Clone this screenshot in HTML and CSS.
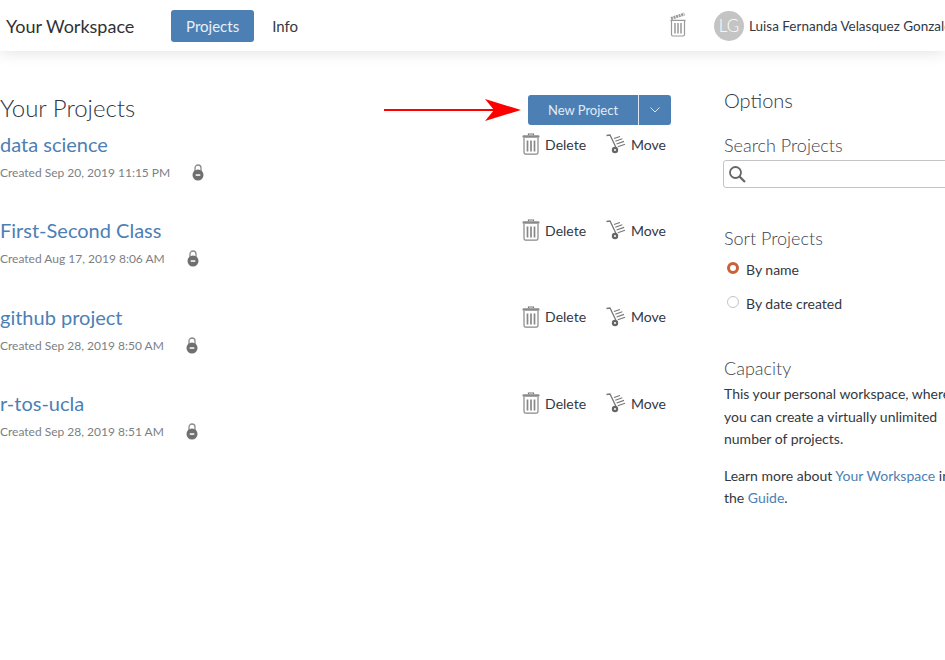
FILE: index.html
```html
<!DOCTYPE html>
<html lang="en">
<head>
<meta charset="utf-8">
<title>Your Workspace</title>
<link rel="stylesheet" href="styles.css">
</head>
<body>
<svg class="defs" width="0" height="0" aria-hidden="true">
  <defs>
    <symbol id="bin" viewBox="0 0 18 22">
      <path d="M6.5 2.2V1h5v1.2" fill="none" stroke="#777" stroke-width="1.2"/>
      <rect x="0.5" y="2.2" width="17" height="2.6" rx="1" fill="#8a8a8a"/>
      <path d="M2 5v14.5q0 1.7 1.7 1.7h10.6q1.7 0 1.7-1.7V5" fill="#fff" stroke="#888" stroke-width="1.2"/>
      <path d="M5.5 7.5v11M9 7.5v11M12.500 7.500v11" stroke="#888" stroke-width="1.7"/>
    </symbol>
    <symbol id="cart" viewBox="0 0 20 20">
      <path d="M0.500 1.500L4 1l6 12.500" fill="none" stroke="#777" stroke-width="1.300"/>
      <path d="M8 4.500l6-2M9.300 7.200l7-2.400M10.600 10l7.400-2.600M11.800 12.800l7.200-2.500" stroke="#777" stroke-width="1.200"/>
      <circle cx="9" cy="16" r="3.200" fill="#666"/>
      <circle cx="9" cy="16" r="1" fill="#fff"/>
    </symbol>
    <symbol id="lock" viewBox="0 0 12 17">
      <path d="M3 7V4a3 3 0 0 1 6 0v3" fill="none" stroke="#8a8a8a" stroke-width="1.300"/>
      <circle cx="6" cy="11" r="5.500" fill="#6f6f6f"/>
      <rect x="3.700" y="10.300" width="4.600" height="1.500" fill="#fff"/>
    </symbol>
  </defs>
</svg>

<header class="topbar">
  <div class="brand">Your Workspace</div>
  <nav class="tabs">
    <a class="tab tab-active">Projects</a>
    <a class="tab">Info</a>
  </nav>
  <div class="top-right">
    <svg class="top-bin" width="18" height="26" viewBox="0 0 18 26" aria-hidden="true">
      <path d="M2 6.500l13.500-4.500" stroke="#999" stroke-width="3" stroke-dasharray="2 0.700"/>
      <path d="M1.500 8.500h15" stroke="#999" stroke-width="1.500"/>
      <path d="M2.500 9v13.500q0 1.500 1.500 1.500h10q1.500 0 1.500-1.500V9" fill="#fff" stroke="#999" stroke-width="1.200"/>
      <path d="M6 11v10.500M9 11v10.500M12 11v10.500" stroke="#999" stroke-width="1.500"/>
    </svg>
    <div class="user">
      <span class="avatar">LG</span>
      <span class="user-name">Luisa Fernanda Velasquez Gonzalez</span>
    </div>
  </div>
</header>

<div class="page">
  <main class="projects">
    <div class="projects-head">
      <h1 class="projects-title">Your Projects</h1>
      <div class="head-actions">
        <svg class="arrow" width="137" height="22" viewBox="0 0 137 22" aria-hidden="true">
          <path d="M0 10h110v2H0z" fill="#f00"/>
          <path d="M101 0l36 11-36 11 9-11z" fill="#f00"/>
        </svg>
        <div class="split-btn">
          <button class="btn-main">New Project</button>
          <button class="btn-caret" aria-label="More">
            <svg width="10" height="6" viewBox="0 0 10 6"><path d="M0.500 0.500L5 5l4.500-4.500" fill="none" stroke="#dce6f1" stroke-width="1"/></svg>
          </button>
        </div>
      </div>
    </div>

    <ul class="project-list">
      <li class="project">
        <div class="project-main">
          <a class="project-name">data science</a>
          <div class="project-meta"><span class="created">Created Sep 20, 2019 11:15 PM</span><svg class="lock" width="12" height="17"><use href="#lock"/></svg></div>
        </div>
        <div class="project-actions">
          <span class="action act-del"><svg width="18" height="22"><use href="#bin"/></svg>Delete</span>
          <span class="action"><svg width="20" height="20"><use href="#cart"/></svg>Move</span>
        </div>
      </li>
      <li class="project">
        <div class="project-main">
          <a class="project-name">First-Second Class</a>
          <div class="project-meta"><span class="created">Created Aug 17, 2019 8:06 AM</span><svg class="lock" width="12" height="17"><use href="#lock"/></svg></div>
        </div>
        <div class="project-actions">
          <span class="action act-del"><svg width="18" height="22"><use href="#bin"/></svg>Delete</span>
          <span class="action"><svg width="20" height="20"><use href="#cart"/></svg>Move</span>
        </div>
      </li>
      <li class="project">
        <div class="project-main">
          <a class="project-name">github project</a>
          <div class="project-meta"><span class="created">Created Sep 28, 2019 8:50 AM</span><svg class="lock" width="12" height="17"><use href="#lock"/></svg></div>
        </div>
        <div class="project-actions">
          <span class="action act-del"><svg width="18" height="22"><use href="#bin"/></svg>Delete</span>
          <span class="action"><svg width="20" height="20"><use href="#cart"/></svg>Move</span>
        </div>
      </li>
      <li class="project">
        <div class="project-main">
          <a class="project-name">r-tos-ucla</a>
          <div class="project-meta"><span class="created">Created Sep 28, 2019 8:51 AM</span><svg class="lock" width="12" height="17"><use href="#lock"/></svg></div>
        </div>
        <div class="project-actions">
          <span class="action act-del"><svg width="18" height="22"><use href="#bin"/></svg>Delete</span>
          <span class="action"><svg width="20" height="20"><use href="#cart"/></svg>Move</span>
        </div>
      </li>
    </ul>
  </main>

  <aside class="options">
    <div class="options-head">
      <h2 class="options-title">Options</h2>
      <span class="close">✕</span>
    </div>
    <h3 class="opt-label">Search Projects</h3>
    <div class="search">
      <svg width="19" height="19" viewBox="0 0 19 19" aria-hidden="true">
        <circle cx="7.500" cy="7.500" r="5.500" fill="none" stroke="#666" stroke-width="1.800"/>
        <path d="M11.500 11.500L17 17" stroke="#666" stroke-width="2.200"/>
      </svg>
    </div>
    <h3 class="opt-label sort-label">Sort Projects</h3>
    <div class="radio-row"><span class="radio radio-on"></span>By name</div>
    <div class="radio-row"><span class="radio"></span>By date created</div>
    <h3 class="opt-label capacity-label">Capacity</h3>
    <p class="opt-text">This your personal workspace, where<br>you can create a virtually unlimited<br>number of projects.</p>
    <p class="opt-text opt-more">Learn more about <a class="link">Your Workspace</a> in<br>the <a class="link">Guide</a>.</p>
  </aside>
</div>
</body>
</html>
```

FILE: styles.css
```css
* { box-sizing: border-box; }
html, body { margin: 0; padding: 0; height: 100%; overflow: hidden; background: #fff; }
body { font-family: Lato, "Open Sans", sans-serif; color: #2f3542; width: 945px; }
.defs { position: absolute; }
h1, h2, h3, p, ul { margin: 0; padding: 0; }
ul { list-style: none; }

.topbar {
  display: flex; align-items: center; height: 51px; background: #fff;
  box-shadow: 0 2px 14px rgba(0,0,0,.11); white-space: nowrap;
  padding-left: 6px;
}
.brand { font-size: 18px; width: 178px; color: #2f3136; }
.tabs { display: flex; align-items: center; gap: 3px; }
.tab { font-size: 15px; padding: 0 15px; height: 32px; line-height: 32px; border-radius: 3px; color: #333842; }
.tab-active { background: #4c80b5; color: #e8eff6; }
.top-right { display: flex; align-items: center; margin-left: 356px; width: 276px; overflow: hidden; flex: none; }
.top-bin { flex: none; margin-right: 27px; margin-top: -2px; }
.user { display: flex; align-items: center; gap: 5px; }
.avatar {
  width: 30px; height: 30px; border-radius: 50%; background: #c4c4c4; color: #fff;
  font-size: 17px; font-weight: 300; display: flex; align-items: center; justify-content: center; flex: none;
}
.user-name { font-size: 13.500px; color: #333842; }

.page { display: flex; }
.projects { width: 671px; flex: none; }
.projects-head { display: flex; align-items: center; justify-content: space-between; padding-top: 34px; height: 83px; }
.projects-title { font-size: 24px; font-weight: 300; color: #2f3542; line-height: 28px; margin-top: -4px; }
.head-actions { display: flex; align-items: center; gap: 7px; }
.arrow { display: block; }
.split-btn { display: flex; height: 30px; border-radius: 3px; overflow: hidden; }
.split-btn button { border: 0; background: #4c80b5; color: #e3ebf4; font-family: inherit; padding: 0; }
.btn-main { width: 111px; font-size: 13px; border-right: 1px solid #dfe8f1 !important; }
.btn-caret { width: 32px; display: flex; align-items: center; justify-content: center; }

.project { display: flex; justify-content: space-between; height: 86.400px; }
.project-name { display: block; font-size: 20px; line-height: 26px; color: #4c80b5; margin-top: -3px; }
.project-meta { display: flex; align-items: center; gap: 22px; margin-top: 7px; }
.created { font-size: 12px; color: #7b7f85; line-height: 17px; }
.lock { flex: none; }
.project-actions { display: flex; align-items: flex-start; margin-top: -1px; padding-right: 5px; }
.action { display: flex; align-items: center; gap: 5px; font-size: 14px; height: 22px; color: #333842; }
.act-del { margin-right: 20px; }

.options { margin-left: 53px; width: 240px; flex: none; padding-top: 36px; white-space: nowrap; }
.options-head { display: flex; justify-content: space-between; align-items: center; height: 26px; }
.options-title { font-size: 20px; font-weight: 300; color: #2f3542; }
.close { font-size: 15px; color: #555; margin-right: 12px; font-weight: 700; font-family: "DejaVu Sans", sans-serif; margin-left: auto; transform: translateX(12px); }
.opt-label { font-size: 18px; font-weight: 300; color: #3c4350; line-height: 22px; }
.options-head + .opt-label { margin-top: 21px; }
.search { width: 240px; height: 28px; margin-top: 4px; margin-left: -1px; border: 1px solid #c4c4c4; border-radius: 3px; display: flex; align-items: center; padding-left: 4px; }
.sort-label { margin-top: 39px; }
.radio-row { display: flex; align-items: center; gap: 7px; font-size: 14px; height: 34px; color: #333842; margin-left: 3px; }
.radio-row:first-of-type { margin-top: 2px; }
.sort-label + .radio-row { margin-top: 3px; }
.radio { width: 12px; height: 12px; border-radius: 50%; border: 1px solid #c4c4c4; background: #fff; flex: none; margin-top: -3px; }
.radio-on { background: #fff; border: 3.500px solid #cb5f3a; }
.capacity-label { margin-top: 37px; }
.opt-text { font-size: 14px; line-height: 22.500px; color: #333842; margin-top: 4px; }
.opt-more { margin-top: 14px; }
.link { color: #4c80b5; }
```
